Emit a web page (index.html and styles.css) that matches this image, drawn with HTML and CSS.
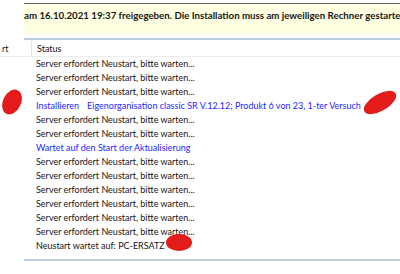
FILE: index.html
```html
<!DOCTYPE html>
<html lang="de">
<head>
    <meta charset="UTF-8">
    <title>Status</title>
    <link rel="stylesheet" href="styles.css">
</head>
<body>
    <div class="banner">am 16.10.2021 19:37 freigegeben. Die Installation muss am jeweiligen Rechner gestartet werden.</div>
    <div class="rule"></div>

    <div class="list">
        <div class="list-head">
            <div class="col-a">rt</div>
            <div class="col-b">Status</div>
        </div>
        <div class="rows">
            <div class="row">Server erfordert Neustart, bitte warten...</div>
            <div class="row">Server erfordert Neustart, bitte warten...</div>
            <div class="row">Server erfordert Neustart, bitte warten...</div>
            <div class="row blue">Installieren<span class="tab">Eigenorganisation classic SR V.12.12; Produkt 6 von 23, 1-ter Versuch</span></div>
            <div class="row">Server erfordert Neustart, bitte warten...</div>
            <div class="row">Server erfordert Neustart, bitte warten...</div>
            <div class="row blue">Wartet auf den Start der Aktualisierung</div>
            <div class="row">Server erfordert Neustart, bitte warten...</div>
            <div class="row">Server erfordert Neustart, bitte warten...</div>
            <div class="row">Server erfordert Neustart, bitte warten...</div>
            <div class="row">Server erfordert Neustart, bitte warten...</div>
            <div class="row">Server erfordert Neustart, bitte warten...</div>
            <div class="row">Server erfordert Neustart, bitte warten...</div>
            <div class="row">Neustart wartet auf: PC-ERSATZ</div>
        </div>
        <div class="rule bottom"></div>
    </div>

    <div class="blot blot-left"></div>
    <div class="blot blot-right"></div>
    <div class="blot blot-name"></div>
</body>
</html>
```

FILE: styles.css
```css
body {
    margin: 0;
    background: #fff;
    font-family: Lato, "Noto Sans", sans-serif;
    font-size: 9px;
    color: #161616;
    overflow: hidden;
}

.banner {
    margin: 3px 0 0 24px;
    height: 27px;
    padding-top: 3px;
    border-top: 1px solid #646464;
    background: #ffffe1;
    font-size: 9.7px;
    font-weight: bold;
    white-space: nowrap;
    overflow: hidden;
    line-height: 16px;
}

.rule {
    margin: 4px 0 0 24px;
    height: 2px;
    background: #bccddf;
}

.list-head {
    display: flex;
    height: 15px;
    margin-top: 1px;
    border-bottom: 1px solid #ececec;
    line-height: 15px;
}

.col-a {
    width: 29px;
    padding-left: 2px;
    border-right: 1px solid #e3e3e3;
    overflow: hidden;
}

.col-b {
    padding-left: 5px;
}

.rows {
    padding: 0 0 0 36px;
}

.row {
    height: 14px;
    line-height: 14px;
    white-space: nowrap;
}

.blue {
    color: #1f1fff;
}

.tab {
    padding-left: 8px;
}

.rule.bottom {
    margin-top: 6px;
}

.blot {
    position: absolute;
    background: #e31b1b;
    border-radius: 50%;
}

.blot-left {
    left: 3px;
    top: 89px;
    width: 18px;
    height: 26px;
    transform: rotate(25deg);
}

.blot-right {
    left: 362px;
    top: 94px;
    width: 36px;
    height: 17px;
    transform: rotate(-30deg);
}

.blot-name {
    left: 166px;
    top: 234px;
    width: 26px;
    height: 17px;
}
```
